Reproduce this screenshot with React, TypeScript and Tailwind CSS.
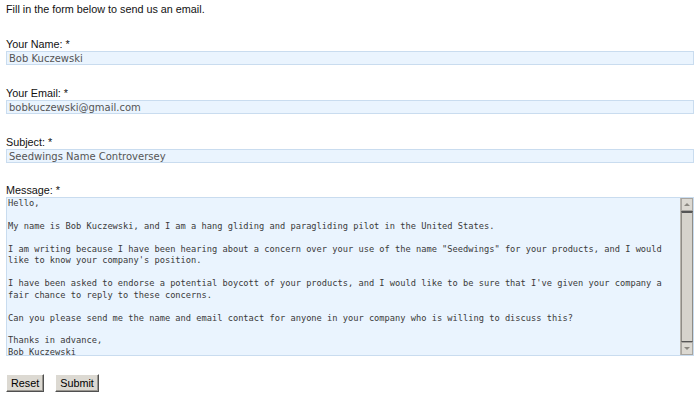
import React from "react";

const message = `Hello,

My name is Bob Kuczewski, and I am a hang gliding and paragliding pilot in the United States.

I am writing because I have been hearing about a concern over your use of the name "Seedwings" for your products, and I would
like to know your company's position.

I have been asked to endorse a potential boycott of your products, and I would like to be sure that I've given your company a
fair chance to reply to these concerns.

Can you please send me the name and email contact for anyone in your company who is willing to discuss this?

Thanks in advance,
Bob Kuczewski`;

const labelCls = "block text-[10.8px] leading-[13px] text-[#111]";
const inputCls =
  "block w-full h-[14px] border border-[#c9dcef] bg-[#eaf4fe] px-[2px] text-[10px] leading-[12px] text-[#555] outline-none";

const Field = ({ label, value }: { label: string; value: string }) => (
  <div className="mt-[22px]">
    <label className={labelCls}>{label}</label>
    <input
      readOnly
      value={value}
      className={inputCls}
      style={{ fontFamily: "'DejaVu Sans', sans-serif" }}
    />
  </div>
);

const Scrollbar = () => (
  <div className="flex w-[13px] shrink-0 flex-col bg-[#d8d5ce] border-l border-[#b8b5ae]">
    {/* up button */}
    <div className="flex h-[13px] items-center justify-center border border-[#a8a5a0] bg-[#dcd9d2]">
      <div className="h-0 w-0 border-x-[3px] border-b-[3px] border-x-transparent border-b-[#8a8780]" />
    </div>
    {/* thumb */}
    <div className="flex-1 border-x border-t-2 border-b border-x-[#8f8c86] border-t-[#555] border-b-[#555] bg-[#d6d3cc]" />
    {/* down button */}
    <div className="flex h-[13px] items-center justify-center border border-[#a8a5a0] bg-[#dcd9d2]">
      <div className="h-0 w-0 border-x-[3px] border-t-[3px] border-x-transparent border-t-[#8a8780]" />
    </div>
  </div>
);

const Button = ({ children }: { children: React.ReactNode }) => (
  <button
    type="button"
    className="h-[18px] border border-t-white border-l-white border-b-[#505050] border-r-[#505050] bg-[#dcd9d2] px-[4px] text-[10.8px] leading-[14px] text-black shadow-[inset_-1px_-1px_0_#9a9790]"
  >
    {children}
  </button>
);

export default function App() {
  return (
    <div
      className="min-h-[395px] w-[700px] bg-white px-[6px] pt-[3px]"
      style={{ fontFamily: "'Liberation Sans', Arial, sans-serif" }}
    >
      <p className="text-[10.8px] leading-[13px] text-[#111]">
        Fill in the form below to send us an email.
      </p>

      <Field label="Your Name: *" value="Bob Kuczewski" />
      <Field label="Your Email: *" value="bobkuczewski@gmail.com" />
      <Field label="Subject: *" value="Seedwings Name Controversey" />

      <div className="mt-[21px]">
        <label className={labelCls}>Message: *</label>
        <div className="flex h-[159px] w-full border border-[#c9dcef] bg-[#eaf4fe]">
          <textarea
            readOnly
            value={message}
            wrap="off"
            className="h-full flex-1 resize-none overflow-hidden bg-transparent px-[1px] pt-0 text-[8.7px] leading-[11.45px] text-[#3a3a3a] outline-none"
            style={{ fontFamily: "'DejaVu Sans Mono', monospace" }}
          />
          <Scrollbar />
        </div>
      </div>

      <div className="mt-[18px] flex gap-[11px]">
        <Button>Reset</Button>
        <Button>Submit</Button>
      </div>
    </div>
  );
}
